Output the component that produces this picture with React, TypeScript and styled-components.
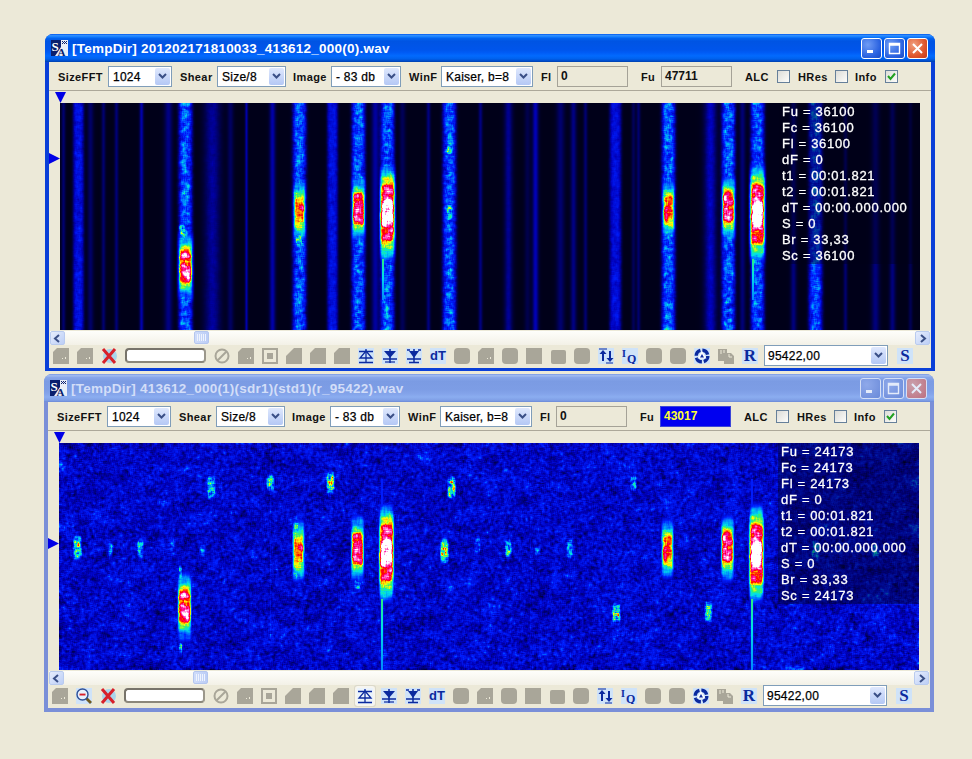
import React, { useEffect, useRef } from 'react';
import styled, { createGlobalStyle, css } from 'styled-components';

const SANS = `'Liberation Sans', Arial, sans-serif`;
const NAVY = '#0b2a9e';
const GREY = '#a9a699';

const GlobalStyle = createGlobalStyle`
  html, body { margin: 0; padding: 0; background: #ece9d8; }
  body { font-family: ${SANS}; }
`;

const Desktop = styled.div`
  width: 972px;
  height: 759px;
  padding-top: 34px;
  box-sizing: border-box;
  display: flex;
  flex-direction: column;
  gap: 3px;
  overflow: hidden;
`;

const Frame = styled.section<{ $active: boolean; $left: number; $tall?: boolean }>`
  width: 890px;
  height: ${p => (p.$tall ? 338 : 337)}px;
  margin-left: ${p => p.$left}px;
  box-sizing: border-box;
  display: flex;
  flex-direction: column;
  border-radius: 8px 8px 0 0;
  overflow: hidden;
  background: ${p => (p.$active ? '#0a3fd8' : '#7a8fd8')};
  padding: 0 4px ${p => (p.$tall ? 4 : 3)}px;
`;

const TitleBar = styled.header<{ $active: boolean }>`
  height: 28px;
  margin: 0 -4px;
  padding: 0 7px 0 6px;
  display: flex;
  align-items: center;
  flex: none;
  ${p =>
    p.$active
      ? css`
          background: linear-gradient(180deg, #0058ee 0%, #3593ff 6%, #127dff 10%, #0262ee 16%, #0054e3 26%, #0055eb 56%, #005bf5 66%, #026afe 78%, #0062ef 88%, #0052d6 94%, #0040ab 100%);
        `
      : css`
          background: linear-gradient(180deg, #7697e7 0%, #a3bcf0 6%, #88a6ea 12%, #7b9be3 26%, #7d9de5 56%, #83a3ea 70%, #8badf0 82%, #7f9fe6 94%, #6b89d6 100%);
        `}
`;

const TitleText = styled.h1<{ $active: boolean }>`
  margin: 1px 0 0 4px;
  flex: 1;
  font: bold 13.5px ${SANS};
  letter-spacing: 0.24px;
  white-space: nowrap;
  color: ${p => (p.$active ? '#fff' : '#d3def8')};
`;

const Caption = styled.button<{ $kind: 'blue' | 'red'; $active: boolean }>`
  width: 21px;
  height: 21px;
  margin-left: 2px;
  padding: 0;
  box-sizing: border-box;
  border: 1px solid ${p => (p.$active ? '#fff' : '#d5dff6')};
  border-radius: 3px;
  display: flex;
  align-items: center;
  justify-content: center;
  background: ${p => {
    if (p.$kind === 'red') return p.$active ? 'radial-gradient(circle at 30% 30%, #f0a080, #e0562c 60%, #c63a1a)' : 'radial-gradient(circle at 30% 30%, #c9a0ac, #bd6f80)';
    return p.$active ? 'radial-gradient(circle at 30% 30%, #6f9cf5, #2a62e0 65%, #1b4cc4)' : 'radial-gradient(circle at 30% 30%, #8fa9ea, #6a8ad9)';
  }};
`;

const Client = styled.div`
  flex: 1;
  display: flex;
  flex-direction: column;
  background: #ece9d8;
  min-height: 0;
`;

const TopBar = styled.div`
  height: 29px;
  flex: none;
  box-sizing: border-box;
  display: flex;
  align-items: center;
  padding: 1px 0 0 9px;
  border-bottom: 1px solid #aca899;
`;

const Label = styled.span<{ $w: number; $ml?: number; $mr?: number }>`
  width: ${p => p.$w}px;
  margin-left: ${p => p.$ml ?? 0}px;
  margin-right: ${p => p.$mr ?? 0}px;
  flex: none;
  font: bold 11px ${SANS};
  letter-spacing: 0.4px;
  white-space: nowrap;
  color: #111;
`;

const Combo = styled.div<{ $w: number; $h?: number }>`
  width: ${p => p.$w}px;
  height: ${p => p.$h ?? 21}px;
  flex: none;
  box-sizing: border-box;
  display: flex;
  align-items: center;
  justify-content: space-between;
  background: #fff;
  border: 1px solid #7f9db9;
  padding: 1px 1px 1px 4px;
  font: 12px ${SANS};
  letter-spacing: 0.25px;
  color: #000;
  -webkit-text-stroke: 0.25px #000;
  white-space: nowrap;
`;

const ComboArrow = styled.span`
  width: 15px;
  align-self: stretch;
  flex: none;
  display: flex;
  align-items: center;
  justify-content: center;
  border-radius: 2px;
  background: linear-gradient(180deg, #dfe8fd, #b4c8f5);
`;

const Field = styled.div<{ $blue?: boolean }>`
  width: 71px;
  height: 21px;
  flex: none;
  box-sizing: border-box;
  padding: 2px 0 0 3px;
  border: 1px solid ${p => (p.$blue ? '#3c46d8' : '#a5a297')};
  background: ${p => (p.$blue ? '#0000f0' : '#ece9d8')};
  color: ${p => (p.$blue ? '#ffff30' : '#111')};
  font: bold 12px/15px ${SANS};
`;

const Check = styled.span`
  width: 13px;
  height: 13px;
  flex: none;
  box-sizing: border-box;
  border: 1px solid #66809a;
  background: linear-gradient(135deg, #dcdcd7, #fdfdfb);
  display: flex;
  align-items: center;
  justify-content: center;
`;

const MarkerStrip = styled.div`
  height: 12px;
  flex: none;
  position: relative;
`;

const DownMark = styled.i`
  position: absolute;
  left: 6px;
  top: 1px;
  width: 11px;
  height: 11px;
  background: #0000e6;
  clip-path: polygon(0 0, 100% 0, 50% 100%);
`;

const SpecRow = styled.div`
  height: 227px;
  flex: none;
  padding-left: 11px;
  position: relative;
`;

const RightMark = styled.i<{ $top: number }>`
  position: absolute;
  left: 0;
  top: ${p => p.$top}px;
  width: 11px;
  height: 11px;
  background: #0000e6;
  clip-path: polygon(0 0, 100% 50%, 0 100%);
`;

const SpecView = styled.div`
  width: 860px;
  height: 227px;
  position: relative;
`;

const SpecCanvas = styled.canvas`
  display: block;
  width: 860px;
  height: 227px;
`;

const InfoBox = styled.div`
  position: absolute;
  right: 0;
  top: 0;
  width: 141px;
  height: 161px;
  box-sizing: border-box;
  padding: 1px 0 0 3px;
  background: rgba(0, 0, 24, 0.42);
  color: #fff;
  font: 13px/16px ${SANS};
  letter-spacing: 0.7px;
  white-space: nowrap;
  -webkit-text-stroke: 0.3px #fff;
`;

const InfoLine = styled.div``;

const ScrollRow = styled.div`
  height: 14px;
  flex: none;
  margin: 1px 1px 0;
  display: flex;
  background: linear-gradient(180deg, #fefefb, #f3f1e7);
`;

const ScrollBtn = styled.span`
  width: 15px;
  height: 14px;
  flex: none;
  box-sizing: border-box;
  border: 1px solid #b9cbef;
  border-radius: 2px;
  background: linear-gradient(135deg, #e6edfd, #bccef6);
  display: flex;
  align-items: center;
  justify-content: center;
`;

const ScrollTrack = styled.div`
  flex: 1;
  padding-left: 129px;
`;

const ScrollThumb = styled.span`
  display: flex;
  justify-content: center;
  align-items: center;
  gap: 1px;
  width: 15px;
  height: 13px;
  box-sizing: border-box;
  border: 1px solid #b4c6ef;
  border-radius: 2px;
  background: linear-gradient(90deg, #cfdcfa, #bccdf6);
`;

const Grip = styled.i`
  width: 1px;
  height: 7px;
  background: #eef3fe;
`;

const ToolRow = styled.div`
  height: 23px;
  flex: none;
  box-sizing: border-box;
  display: flex;
  align-items: center;
  gap: 8px;
  padding: 0 0 2px 4px;
`;

const Tool = styled.span<{ $tint?: boolean; $raised?: boolean }>`
  width: 16px;
  height: 16px;
  flex: none;
  display: flex;
  align-items: center;
  justify-content: center;
  background: ${p => (p.$tint ? '#cfe3f9' : 'transparent')};
  ${p =>
    p.$raised &&
    css`
      box-shadow: 0 0 0 2px #f6f5ef, 0 0 0 3px #dcd9ca;
      background: #eaf3fc;
      border-radius: 1px;
    `}
`;

const ToolLetter = styled.span<{ $serif?: boolean }>`
  color: ${NAVY};
  font: bold ${p => (p.$serif ? 17 : 13)}px ${p => (p.$serif ? `'Liberation Serif', serif` : SANS)};
  line-height: 16px;
`;

const Progress = styled.div`
  width: 81px;
  height: 15px;
  flex: none;
  box-sizing: border-box;
  background: #fff;
  border: 2px solid #77736a;
  border-color: #77736a #9b978b #8b877b #77736a;
  border-radius: 4px;
`;

const Ico = styled.svg`
  width: 16px;
  height: 16px;
  display: block;
`;

const Chevron = ({ dir }: { dir: 'down' | 'left' | 'right' }) => {
  const points = { down: '2,3 5.5,6.5 9,3', left: '7,2 3,5.5 7,9', right: '4,2 8,5.5 4,9' }[dir];
  return (
    <svg width="11" height="11" viewBox="0 0 11 11">
      <polyline points={points} fill="none" stroke="#3a4f86" strokeWidth="2" />
    </svg>
  );
};

const GREY_SHAPES: Record<string, string> = {
  blob: 'M0 4 Q0 0 4 0 H12 Q16 0 16 4 V12 Q16 16 12 16 H4 Q0 16 0 12Z',
  notch: 'M0 4 L4 0 H16 V16 H0Z',
  cut: 'M8 0 H16 V16 H0 V8Z',
  cutSoft: 'M5 0 H16 V16 H0 V5Z',
  square: 'M0 0 H16 V16 H0Z',
  small: 'M1 4 Q1 2 3 2 H14 Q16 2 16 4 V14 Q16 16 14 16 H3 Q1 16 1 14Z',
};

const GreyIcon = ({ shape }: { shape: string }) => (
  <Tool>
    <Ico viewBox="0 0 16 16">
      <path d={GREY_SHAPES[shape]} fill={GREY} />
      {shape === 'notch' && <path d="M12 9 h1 v2 h-1z M9 10 h1 v1 h-1z" fill="#ece9d8" />}
    </Ico>
  </Tool>
);

const StopIcon = () => (
  <Tool>
    <Ico viewBox="0 0 16 16">
      <circle cx="8" cy="8" r="6.5" fill="none" stroke={GREY} strokeWidth="2" />
      <line x1="3.5" y1="12.5" x2="12.5" y2="3.5" stroke={GREY} strokeWidth="2" />
    </Ico>
  </Tool>
);

const FrameIcon = () => (
  <Tool>
    <Ico viewBox="0 0 16 16">
      <rect x="1" y="1" width="14" height="14" fill="none" stroke={GREY} strokeWidth="2" />
      <rect x="5" y="5" width="6" height="6" fill={GREY} />
    </Ico>
  </Tool>
);

const CrossIcon = () => (
  <Tool>
    <Ico viewBox="0 0 16 16">
      <circle cx="9" cy="8" r="7" fill="#a9d4ea" />
      <path d="M2 1 L14 15 M14 1 L2 15" stroke="#d8202a" strokeWidth="3" />
    </Ico>
  </Tool>
);

const LensIcon = () => (
  <Tool $tint>
    <Ico viewBox="0 0 16 16">
      <line x1="9.5" y1="9.5" x2="15" y2="15" stroke="#6e5a20" strokeWidth="2.8" />
      <circle cx="6.5" cy="6.5" r="5.5" fill="#e6f1fc" stroke="#2d4f96" strokeWidth="1.4" />
      <rect x="3.5" y="5.6" width="6" height="1.9" fill="#d8202a" />
    </Ico>
  </Tool>
);

const EdgeUpIcon = ({ raised }: { raised?: boolean }) => (
  <Tool $tint $raised={raised}>
    <Ico viewBox="0 0 16 16">
      <path d="M1 3.5 H15 M8 1 V15 M1 14.5 H15" stroke={NAVY} strokeWidth="1.3" fill="none" />
      <path d="M8 3 L14 10 H2Z" fill="none" stroke={NAVY} strokeWidth="1.3" />
    </Ico>
  </Tool>
);

const EdgeDownIcon = () => (
  <Tool $tint>
    <Ico viewBox="0 0 16 16">
      <path d="M8 1 V15 M1 11 H15" stroke={NAVY} strokeWidth="1.5" fill="none" />
      <path d="M2 3 H14 L8 10Z" fill={NAVY} />
      <path d="M3 14 H13" stroke={NAVY} strokeWidth="1.2" />
    </Ico>
  </Tool>
);

const EdgeBothIcon = () => (
  <Tool $tint>
    <Ico viewBox="0 0 16 16">
      <path d="M8 1 V15 M1 2 H4 M12 2 H15 M1 11 H15 M3 14.5 H13" stroke={NAVY} strokeWidth="1.5" fill="none" />
      <path d="M3 3 H13 L8 10Z" fill={NAVY} />
    </Ico>
  </Tool>
);

const SwapIcon = () => (
  <Tool $tint>
    <Ico viewBox="0 0 16 16">
      <path d="M1 1 H9 M15 15 H8" stroke={NAVY} strokeWidth="1.2" />
      <path d="M5 13 V5 M12 3 V11" stroke={NAVY} strokeWidth="2" />
      <path d="M1.5 6 L5 2 L8.5 6Z M8.5 10 L12 14 L15.5 10Z" fill={NAVY} />
    </Ico>
  </Tool>
);

const IqIcon = () => (
  <Tool $tint>
    <Ico viewBox="0 0 16 16">
      <text x="0" y="9" fontFamily="'Liberation Serif', serif" fontWeight="bold" fontSize="10" fill={NAVY}>I</text>
      <text x="5" y="15" fontFamily="'Liberation Serif', serif" fontWeight="bold" fontSize="12" fill={NAVY}>Q</text>
    </Ico>
  </Tool>
);

const CycleIcon = () => (
  <Tool $tint>
    <Ico viewBox="0 0 16 16">
      <circle cx="8" cy="8" r="5.8" fill="none" stroke={NAVY} strokeWidth="3.4" strokeDasharray="7 2" />
      <path d="M8 3 L12.5 10.5 H3.5Z" fill="#fff" opacity="0.9" />
      <path d="M8 6 L10 9.4 H6Z" fill={NAVY} />
    </Ico>
  </Tool>
);

const CopyIcon = () => (
  <Tool>
    <Ico viewBox="0 0 16 16">
      <path d="M0 1 H9 V13 H0Z M9 5 H13 L16 8 V16 H6 V13 H9Z" fill={GREY} />
      <path d="M3 2 V6 M6 2 V5 M11 6 V9 H14" stroke="#ece9d8" strokeWidth="1" fill="none" />
    </Ico>
  </Tool>
);

const SALogo = () => (
  <svg width="17" height="16" viewBox="0 0 17 16">
    <rect width="17" height="16" fill="#0a1f6e" />
    <path d="M17 0 V16 H4 L10 7 V0Z" fill="#e8ecf6" />
    <path d="M11 1 h1 v1 h-1z M13 1 h1 v1 h-1z M15 1 h1 v1 h-1z M12 2 h1 v1 h-1z M14 2 h1 v1 h-1z M11 3 h1 v1 h-1z M13 3 h1 v1 h-1z M15 3 h1 v1 h-1z" fill="#0a1f6e" />
    <text x="0.5" y="11" fontFamily="'Liberation Serif', serif" fontWeight="bold" fontSize="13" fill="#fff">S</text>
    <text x="6.5" y="15.5" fontFamily="'Liberation Serif', serif" fontWeight="bold" fontSize="11" fill="#0a1f6e">A</text>
  </svg>
);

// spectrogram data, x/y are page coordinates so they can be read off the picture
type Stripe = [number, number, number, number?];
type Burst = { x: number; y: number; w: number; h: number; kind: 'pink' | 'orange' | 'white' };
type Spot = [number, number, number, number, number];

const STRIPES: Stripe[] = [
  [63, 0.13, 2], [78, 0.3, 5.5, 0.35], [90, 0.12, 3], [103, 0.13, 2], [116, 0.14, 2], [141, 0.21, 2], [168, 0.16, 4],
  [185, 0.42, 7, 0.52], [212, 0.19, 8, 0.2], [230, 0.11, 3], [246, 0.21, 1.5], [272, 0.21, 3], [299, 0.42, 7, 0.52],
  [332, 0.3, 5.5, 0.3], [358, 0.42, 7, 0.52], [375, 0.2, 4], [387, 0.42, 7, 0.52], [402, 0.1, 3], [428, 0.15, 2],
  [449, 0.4, 7, 0.52], [480, 0.15, 2], [508, 0.18, 4, 0.1], [527, 0.08, 3], [535, 0.23, 3], [560, 0.13, 4], [573, 0.16, 3],
  [585, 0.13, 2], [615, 0.29, 6, 0.3], [633, 0.1, 2], [638, 0.13, 2], [668, 0.42, 7, 0.52], [710, 0.24, 6, 0.2],
  [728, 0.42, 7, 0.52], [742, 0.14, 3], [757, 0.42, 7, 0.52], [793, 0.15, 3], [815, 0.4, 7, 0.45], [845, 0.13, 2],
  [875, 0.15, 4], [892, 0.15, 3], [910, 0.09, 2],
];

const BURSTS: Burst[] = [
  { x: 185, y: 266, w: 8, h: 27, kind: 'pink' },
  { x: 299, y: 210, w: 7, h: 24, kind: 'orange' },
  { x: 358, y: 208, w: 7.5, h: 26, kind: 'pink' },
  { x: 387, y: 213, w: 8.5, h: 46, kind: 'white' },
  { x: 668, y: 208, w: 7, h: 23, kind: 'orange' },
  { x: 728, y: 208, w: 7.5, h: 26, kind: 'pink' },
  { x: 757, y: 213, w: 8.5, h: 46, kind: 'white' },
];

const TOP_SPOTS: Spot[] = [
  [449, 148, 4, 8, 0.55], [449, 212, 4, 12, 0.56], [449, 272, 3, 6, 0.52], [182, 232, 4, 10, 0.58], [299, 240, 5, 8, 0.58],
];

const BOTTOM_SPOTS: Spot[] = [
  [77, 547, 5, 14, 0.63], [110, 548, 3, 10, 0.43], [140, 548, 4, 12, 0.52], [172, 547, 3, 10, 0.4], [202, 550, 4, 8, 0.43],
  [211, 487, 5, 13, 0.6], [270, 482, 5, 10, 0.54], [330, 482, 5, 13, 0.62], [444, 551, 5, 14, 0.67], [451, 487, 5, 13, 0.62],
  [477, 545, 4, 10, 0.44], [508, 548, 4, 12, 0.56], [537, 550, 4, 6, 0.42], [569, 548, 4, 12, 0.47], [633, 483, 4, 10, 0.52],
  [616, 613, 5, 13, 0.58], [708, 611, 5, 12, 0.58], [815, 550, 5, 12, 0.52], [875, 550, 5, 10, 0.44],
  [180, 572, 2, 9, 0.55], [180, 648, 2.5, 6, 0.55], [295, 572, 3, 10, 0.5], [357, 584, 4, 6, 0.5], [296, 526, 4, 5, 0.58],
];

const RAMP: [number, number, number, number][] = [
  [0, 0, 0, 16], [0.12, 0, 0, 90], [0.25, 0, 0, 185], [0.38, 0, 30, 255], [0.48, 0, 130, 255], [0.57, 0, 225, 230],
  [0.64, 50, 240, 110], [0.72, 255, 255, 0], [0.79, 255, 130, 0], [0.85, 255, 0, 0], [0.91, 255, 0, 140], [0.97, 255, 120, 210], [1.02, 255, 255, 255],
];

function colorAt(v: number): [number, number, number] {
  if (v <= 0) return [0, 0, 16];
  for (let i = 1; i < RAMP.length; i++) {
    if (v <= RAMP[i][0]) {
      const a = RAMP[i - 1];
      const b = RAMP[i];
      const t = (v - a[0]) / (b[0] - a[0]);
      return [a[1] + (b[1] - a[1]) * t, a[2] + (b[2] - a[2]) * t, a[3] + (b[3] - a[3]) * t];
    }
  }
  return [255, 255, 255];
}

function makeNoise(w: number, h: number, seed: number, rx: number, ry: number) {
  let s = seed;
  const rnd = () => {
    s = (s + 0x6d2b79f5) | 0;
    let t = Math.imul(s ^ (s >>> 15), 1 | s);
    t = (t + Math.imul(t ^ (t >>> 7), 61 | t)) ^ t;
    return ((t ^ (t >>> 14)) >>> 0) / 4294967296;
  };
  const raw = new Float32Array(w * h);
  for (let i = 0; i < raw.length; i++) raw[i] = rnd() - 0.5;
  const out = new Float32Array(w * h);
  const root = Math.sqrt((2 * rx + 1) * (2 * ry + 1));
  for (let y = 0; y < h; y++) {
    for (let x = 0; x < w; x++) {
      let sum = 0;
      for (let dy = -ry; dy <= ry; dy++) {
        for (let dx = -rx; dx <= rx; dx++) {
          const yy = Math.min(h - 1, Math.max(0, y + dy));
          const xx = Math.min(w - 1, Math.max(0, x + dx));
          sum += raw[yy * w + xx];
        }
      }
      out[y * w + x] = sum / root;
    }
  }
  return out;
}

const LAYERS = {
  pink: [[1.4, 1, 0.58], [1.12, 0.95, 0.72], [0.8, 0.9, 0.93]],
  orange: [[1.4, 1, 0.58], [1.1, 0.95, 0.71], [0.75, 0.85, 0.83]],
  white: [[1.12, 0.95, 0.72], [0.85, 0.95, 0.93], [0.42, 0.85, 1.08]],
};

function paint(canvas: HTMLCanvasElement, scene: 'stripes' | 'noise') {
  const W = 860;
  const H = 227;
  const ox = scene === 'stripes' ? 60 : 59;
  const oy = scene === 'stripes' ? 103 : 443;
  const ctx = canvas.getContext('2d');
  if (!ctx) return;
  const fine = makeNoise(W, H, scene === 'stripes' ? 11 : 29, 1, 1);
  const wide = makeNoise(W, H, 47, 7, 5);
  const speck = makeNoise(W, H, 83, 1, 0);
  const patch = makeNoise(W, H, 131, 2, 2);
  const field = new Float32Array(W * H);
  const shiftX = scene === 'stripes' ? 0 : -1;
  const shiftY = scene === 'stripes' ? 0 : 340;

  for (let y = 0; y < H; y++) {
    for (let x = 0; x < W; x++) {
      const px = x + ox;
      const py = y + oy;
      const n = fine[y * W + x];
      const m = patch[y * W + x];
      let v: number;
      if (scene === 'stripes') {
        v = 0.015;
        for (const [cx, a, w, s] of STRIPES) {
          const d = (px - cx) / w;
          if (Math.abs(d) < 3) {
            const shape = s && a > 0.28 ? Math.exp(-d * d * d * d) : Math.exp(-d * d);
            v += a * shape * (1 + (s ?? 0.03) * (0.6 * n + 0.6 * m));
          }
        }
      } else {
        v = 0.275 + 0.05 * speck[y * W + x] + 0.15 * n + 0.08 * wide[y * W + x];
        if (Math.abs(px - 270) < 1 && py < 640) v += 0.05;
        if (Math.abs(px - 530) < 1) v += 0.03;
      }
      const spots = scene === 'stripes' ? TOP_SPOTS : BOTTOM_SPOTS;
      for (const [cx, cy, w, h, a] of spots) {
        const dx = (px - cx) / w;
        const dy = (py - cy) / h;
        if (Math.abs(dx) < 2 && Math.abs(dy) < 2) {
          const e = Math.exp(-(dx * dx * dx * dx) - dy * dy * dy * dy);
          v = Math.max(v, a * e * (1 + 0.55 * n));
        }
      }
      for (const b of BURSTS) {
        const bx = b.x + shiftX;
        const by = b.y + shiftY;
        const dx0 = px - bx;
        const dy0 = py - by;
        if (b.kind === 'white') {
          // thin bright trace running down from the strong pulses
          const lx = (dx0 + 4.5) / 1.8;
          const bottom = scene === 'stripes' ? 300 : 672;
          const start = scene === 'stripes' ? by - 30 : by - 75;
          if (py > start && py < bottom && Math.abs(lx) < 3) {
            const fade = py < by + 46 ? 0.4 : 0.68 - (0.16 * (py - by - 46)) / (bottom - by - 46);
            v = Math.max(v, fade * Math.exp(-lx * lx));
          }
        }
        if (Math.abs(dx0) > 16 || Math.abs(dy0) > 90) continue;
        for (const [hs, ws, amp] of LAYERS[b.kind]) {
          const dx = dx0 / (b.w * ws);
          const dy = dy0 / (b.h * hs);
          const e = Math.exp(-(dx * dx * dx * dx * dx * dx) - dy * dy * dy * dy * dy * dy);
          v = Math.max(v, amp * e * (1 + 0.22 * m));
        }
      }
      field[y * W + x] = v;
    }
  }

  const image = ctx.createImageData(W, H);
  for (let i = 0; i < field.length; i++) {
    const [r, g, b] = colorAt(field[i]);
    image.data[i * 4] = r;
    image.data[i * 4 + 1] = g;
    image.data[i * 4 + 2] = b;
    image.data[i * 4 + 3] = 255;
  }
  ctx.putImageData(image, 0, 0);
  ctx.filter = 'blur(0.7px)';
  ctx.drawImage(canvas, 0, 0);
  ctx.filter = 'none';
}

const Spectrogram = ({ scene }: { scene: 'stripes' | 'noise' }) => {
  const ref = useRef<HTMLCanvasElement>(null);
  useEffect(() => {
    if (ref.current) paint(ref.current, scene);
  }, [scene]);
  return <SpecCanvas ref={ref} width={860} height={227} />;
};

type WindowProps = {
  active: boolean;
  left: number;
  tall?: boolean;
  title: string;
  fu: string;
  fuBlue?: boolean;
  lens?: boolean;
  raised?: boolean;
  markTop: number;
  scene: 'stripes' | 'noise';
  freq: string;
};

const SpectrumWindow = ({ active, left, tall, title, fu, fuBlue, lens, raised, markTop, scene, freq }: WindowProps) => {
  const info = [
    `Fu = ${freq}`,
    `Fc = ${freq}`,
    `Fl = ${freq}`,
    'dF = 0',
    't1 = 00:01.821',
    't2 = 00:01.821',
    'dT = 00:00.000.000',
    'S = 0',
    'Br = 33,33',
    `Sc = ${freq}`,
  ];
  const glyph = active ? '#fff' : '#e4ebfa';
  return (
    <Frame $active={active} $left={left} $tall={tall}>
      <TitleBar $active={active}>
        <SALogo />
        <TitleText $active={active}>{title}</TitleText>
        <Caption $kind="blue" $active={active} aria-label="minimize">
          <svg width="13" height="13" viewBox="0 0 13 13"><rect x="2" y="8" width="6" height="3" fill={glyph} /></svg>
        </Caption>
        <Caption $kind="blue" $active={active} aria-label="maximize">
          <svg width="13" height="13" viewBox="0 0 13 13"><path d="M1.5 1.5 H11.5 V11.5 H1.5Z M1.5 3 H11.5" fill="none" stroke={glyph} strokeWidth="1.4" /></svg>
        </Caption>
        <Caption $kind="red" $active={active} aria-label="close">
          <svg width="13" height="13" viewBox="0 0 13 13"><path d="M2 2 L11 11 M11 2 L2 11" stroke={glyph} strokeWidth="2" /></svg>
        </Caption>
      </TitleBar>
      <Client>
        <TopBar>
          <Label $w={45} $mr={5}>SizeFFT</Label>
          <Combo $w={64}>1024<ComboArrow><Chevron dir="down" /></ComboArrow></Combo>
          <Label $w={32} $ml={8} $mr={5}>Shear</Label>
          <Combo $w={69}>Size/8<ComboArrow><Chevron dir="down" /></ComboArrow></Combo>
          <Label $w={34} $ml={7} $mr={4}>Image</Label>
          <Combo $w={70}>- 83 db<ComboArrow><Chevron dir="down" /></ComboArrow></Combo>
          <Label $w={29} $ml={8} $mr={3}>WinF</Label>
          <Combo $w={92}>Kaiser, b=8<ComboArrow><Chevron dir="down" /></ComboArrow></Combo>
          <Label $w={12} $ml={8} $mr={4}>Fl</Label>
          <Field>0</Field>
          <Label $w={15} $ml={13} $mr={5}>Fu</Label>
          <Field $blue={fuBlue}>{fu}</Field>
          <Label $w={23} $ml={13} $mr={9}>ALC</Label>
          <Check />
          <Label $w={30} $ml={8} $mr={7}>HRes</Label>
          <Check />
          <Label $w={22} $ml={7} $mr={8}>Info</Label>
          <Check>
            <svg width="11" height="11" viewBox="0 0 11 11"><polyline points="2,5 4.5,8 9,2.5" fill="none" stroke="#21a121" strokeWidth="2" /></svg>
          </Check>
        </TopBar>
        <MarkerStrip><DownMark /></MarkerStrip>
        <SpecRow>
          <RightMark $top={markTop} />
          <SpecView>
            <Spectrogram scene={scene} />
            <InfoBox>
              {info.map(line => (
                <InfoLine key={line}>{line}</InfoLine>
              ))}
            </InfoBox>
          </SpecView>
        </SpecRow>
        <ScrollRow>
          <ScrollBtn><Chevron dir="left" /></ScrollBtn>
          <ScrollTrack>
            <ScrollThumb><Grip /><Grip /><Grip /><Grip /><Grip /></ScrollThumb>
          </ScrollTrack>
          <ScrollBtn><Chevron dir="right" /></ScrollBtn>
        </ScrollRow>
        <ToolRow>
          <GreyIcon shape="notch" />
          {lens ? <LensIcon /> : <GreyIcon shape="notch" />}
          <CrossIcon />
          <Progress />
          <StopIcon />
          <GreyIcon shape="notch" />
          <FrameIcon />
          <GreyIcon shape="cut" />
          <GreyIcon shape="cutSoft" />
          <GreyIcon shape="cutSoft" />
          <EdgeUpIcon raised={raised} />
          <EdgeDownIcon />
          <EdgeBothIcon />
          <Tool $tint><ToolLetter>dT</ToolLetter></Tool>
          <GreyIcon shape="blob" />
          <GreyIcon shape="notch" />
          <GreyIcon shape="blob" />
          <GreyIcon shape="square" />
          <GreyIcon shape="small" />
          <GreyIcon shape="blob" />
          <SwapIcon />
          <IqIcon />
          <GreyIcon shape="blob" />
          <GreyIcon shape="blob" />
          <CycleIcon />
          <CopyIcon />
          <Tool $tint><ToolLetter $serif>R</ToolLetter></Tool>
          <ValueCombo>95422,00<ComboArrow><Chevron dir="down" /></ComboArrow></ValueCombo>
          <Tool $tint><ToolLetter $serif>S</ToolLetter></Tool>
        </ToolRow>
      </Client>
    </Frame>
  );
};

const ValueCombo = styled(Combo).attrs({ $w: 124 })`
  margin: 0 1px 0 -2px;
  padding-left: 3px;
`;

export default function App() {
  return (
    <>
      <GlobalStyle />
      <Desktop>
        <SpectrumWindow
          active
          left={45}
          title="[TempDir] 201202171810033_413612_000(0).wav"
          fu="47711"
          markTop={50}
          scene="stripes"
          freq="36100"
        />
        <SpectrumWindow
          active={false}
          left={44}
          tall
          title="[TempDir] 413612_000(1)(sdr1)(std1)(r_95422).wav"
          fu="43017"
          fuBlue
          lens
          raised
          markTop={95}
          scene="noise"
          freq="24173"
        />
      </Desktop>
    </>
  );
}
